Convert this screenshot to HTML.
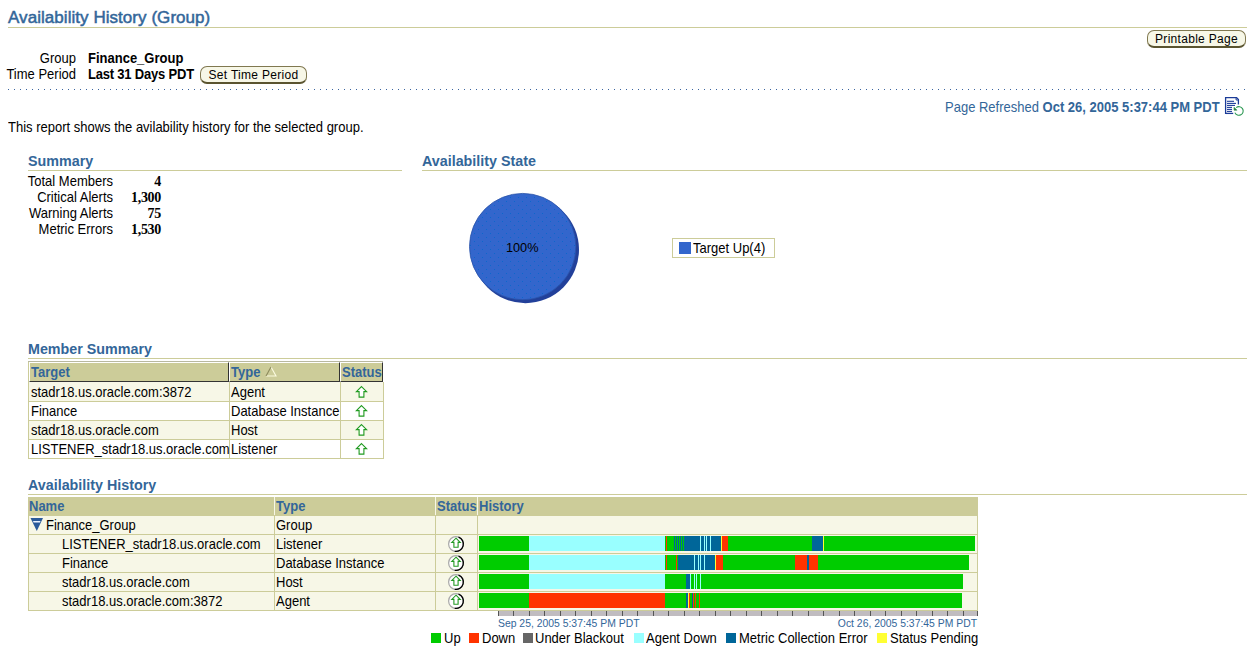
<!DOCTYPE html>
<html><head><meta charset="utf-8">
<style>
html,body{margin:0;padding:0;background:#fff;width:1251px;height:652px;overflow:hidden;position:relative;font-family:"Liberation Sans",sans-serif;color:#000}
.a{position:absolute;white-space:nowrap}
.t13{font-size:13px;line-height:15px;transform:scaleY(1.09);transform-origin:0 7.2px}
.t17{font-size:17px;line-height:19px;color:#336699;-webkit-text-stroke:0.5px #336699;letter-spacing:0.05px}
.hd{font-size:14.3px;line-height:16px;font-weight:bold;color:#336699}
.b{font-weight:bold}
.r{text-align:right}
.line{position:absolute;height:1px;background:#cccc99}
.btn{position:absolute;box-sizing:border-box;border:1px solid #807850;border-bottom:2px solid #5a5430;border-radius:7px;background:#f7f7e7;font-size:12px;line-height:14px;text-align:center;letter-spacing:0.3px}
.th{color:#336699;font-weight:bold}
.serif{font-family:"Liberation Serif",serif;font-weight:bold;font-size:14px;letter-spacing:-0.3px}
.blue{color:#336699}
.rect{position:absolute}
</style></head>
<body>
<!-- Title -->
<div class="a t17" style="left:8px;top:8px">Availability History (Group)</div>
<div class="line" style="left:8px;top:27px;width:1239px"></div>
<div class="btn" style="left:1147px;top:30px;width:99px;height:18px;padding-top:1px">Printable Page</div>

<div class="a t13 r" style="left:0;width:76px;top:51px">Group</div>
<div class="a t13 b" style="left:88px;top:51px">Finance_Group</div>
<div class="a t13 r" style="left:0;width:76px;top:67px">Time Period</div>
<div class="a t13 b" style="left:88px;top:67px;letter-spacing:-0.2px">Last 31 Days PDT</div>
<div class="btn" style="left:200px;top:66px;width:107px;height:18px;padding-top:1px">Set Time Period</div>

<div class="a" style="left:8px;top:89px;width:1239px;height:1px;background-image:linear-gradient(to right,#3a64a0 1px,transparent 1px);background-size:6px 1px"></div>

<div class="a t13 blue" style="left:945px;top:100px">Page Refreshed <b>Oct 26, 2005 5:37:44 PM PDT</b></div>

<svg class="a" style="left:1222px;top:95px" width="26" height="24" viewBox="0 0 26 24">
<path d="M3.6 19 L3.6 2.6 L14.6 2.6 L16.4 4.4 L16.4 9.6" fill="none" stroke="#1c3c98" stroke-width="1.3"/>
<path d="M3.6 18.4 L11.2 18.4" fill="none" stroke="#1c3c98" stroke-width="1.3"/>
<path d="M14.1 2.6 L14.1 5 L16.4 5" fill="none" stroke="#1c3c98" stroke-width="1"/>
<g stroke="#1c3c98" stroke-width="1.1">
<line x1="5" y1="6.3" x2="12" y2="6.3"/><line x1="5" y1="8.4" x2="14" y2="8.4"/><line x1="5" y1="10.4" x2="13" y2="10.4"/>
<line x1="5" y1="12.4" x2="10" y2="12.4"/><line x1="5" y1="14.4" x2="10" y2="14.4"/><line x1="5" y1="16.4" x2="10" y2="16.4"/>
</g>
<path d="M12.9 17.6 A4.3 4.3 0 1 0 14.2 12.6" fill="none" stroke="#2f9a55" stroke-width="1.1"/>
<path d="M12.1 12.3 L12.1 15.2 L14.9 15.2 Z" fill="#1f7f3a" stroke="#1f7f3a" stroke-width="0.6"/>
</svg>
<div class="a t13" style="left:8px;top:120px">This report shows the avilability history for the selected group.</div>

<!-- Summary -->
<div class="a hd" style="left:28px;top:153px">Summary</div>
<div class="line" style="left:28px;top:170px;width:374px"></div>
<div class="a t13 r" style="left:0;width:113px;top:174px">Total Members</div>
<div class="a t13 r" style="left:0;width:113px;top:190px">Critical Alerts</div>
<div class="a t13 r" style="left:0;width:113px;top:206px">Warning Alerts</div>
<div class="a t13 r" style="left:0;width:113px;top:222px">Metric Errors</div>
<div class="a t13 r serif" style="left:100px;width:61px;top:174px">4</div>
<div class="a t13 r serif" style="left:100px;width:61px;top:190px">1,300</div>
<div class="a t13 r serif" style="left:100px;width:61px;top:206px">75</div>
<div class="a t13 r serif" style="left:100px;width:61px;top:222px">1,530</div>

<!-- Availability State -->
<div class="a hd" style="left:422px;top:153px">Availability State</div>
<div class="line" style="left:422px;top:170px;width:825px"></div>
<svg class="a" style="left:460px;top:185px" width="130" height="125">
  <defs><pattern id="dots" width="8" height="8" patternUnits="userSpaceOnUse"><rect width="8" height="8" fill="#3366cc"/><rect x="6" y="0" width="1" height="1" fill="#0d66cc"/><rect x="2" y="4" width="1" height="1" fill="#0d66cc"/></pattern></defs>
  <circle cx="65.4" cy="64.6" r="53.6" fill="#22409a"/>
  <circle cx="62.7" cy="61.6" r="53.2" fill="url(#dots)" stroke="#2a52a8" stroke-width="0.8"/>
</svg>
<div class="a" style="left:506px;top:241px;font-size:12.7px;line-height:15px">100%</div>
<div class="a" style="left:672px;top:238px;width:101px;height:18px;border:1px solid #cccc99"></div>
<div class="rect" style="left:679px;top:242px;width:12px;height:12px;background:#3366cc"></div>
<div class="a t13" style="left:693px;top:241px">Target Up(4)</div>

<!-- Member Summary -->
<div class="a hd" style="left:28px;top:341px">Member Summary</div>
<div class="line" style="left:28px;top:358px;width:1219px"></div>

<!-- Member Summary table -->
<div class="rect" style="left:28px;top:361px;width:356px;height:98px;background:#cccc99"></div>
<div class="rect" style="left:28px;top:361px;width:355px;height:1px;background:#b8b8a0"></div><div class="rect" style="left:383px;top:361px;width:1px;height:21px;background:#fff"></div>
<!-- header cells -->
<div class="rect" style="left:29px;top:362px;width:199px;height:19px;background:#cccc99;border-top:1px solid #fff;border-left:1px solid #fff;border-bottom:1px solid #333;border-right:1px solid #333;box-sizing:border-box;height:20px;width:200px"></div>
<div class="rect" style="left:229px;top:362px;width:111px;height:20px;background:#cccc99;border-top:1px solid #fff;border-left:1px solid #fff;border-bottom:1px solid #333;border-right:1px solid #333;box-sizing:border-box"></div>
<div class="rect" style="left:340px;top:362px;width:43px;height:20px;background:#cccc99;border-top:1px solid #fff;border-left:1px solid #fff;border-bottom:1px solid #333;border-right:1px solid #333;box-sizing:border-box"></div>
<div class="a t13 th" style="left:31px;top:365px">Target</div>
<div class="a t13 th" style="left:231px;top:365px">Type</div>
<svg class="a" style="left:265px;top:366px" width="12" height="11"><path d="M6 1 L11 10 L1 10" fill="none" stroke="#fbfbe0" stroke-width="1.1"/><path d="M1 10 L6 1" fill="none" stroke="#8c8a5c" stroke-width="1.1"/></svg>
<div class="a t13 th" style="left:342px;top:365px">Status</div>
<div class="rect" style="left:29px;top:382px;width:200px;height:19px;background:#f7f7e7"></div><div class="rect" style="left:230px;top:382px;width:110px;height:19px;background:#f7f7e7"></div><div class="rect" style="left:341px;top:382px;width:42px;height:19px;background:#f7f7e7"></div><div class="a t13" style="left:31px;top:385px">stadr18.us.oracle.com:3872</div><div class="a t13" style="left:231px;top:385px">Agent</div><svg class="a" style="left:355px;top:385px" width="13" height="14"><path d="M6.5 1.6 L11.6 6.6 L8.9 6.6 L8.9 12.1 L4.1 12.1 L4.1 6.6 L1.4 6.6 Z" fill="#fff" stroke="#1f9a1f" stroke-width="1.1" stroke-linejoin="miter"/></svg>
<div class="rect" style="left:29px;top:402px;width:200px;height:18px;background:#ffffff"></div><div class="rect" style="left:230px;top:402px;width:110px;height:18px;background:#ffffff"></div><div class="rect" style="left:341px;top:402px;width:42px;height:18px;background:#ffffff"></div><div class="a t13" style="left:31px;top:404px">Finance</div><div class="a t13" style="left:231px;top:404px">Database Instance</div><svg class="a" style="left:355px;top:404px" width="13" height="14"><path d="M6.5 1.6 L11.6 6.6 L8.9 6.6 L8.9 12.1 L4.1 12.1 L4.1 6.6 L1.4 6.6 Z" fill="#fff" stroke="#1f9a1f" stroke-width="1.1" stroke-linejoin="miter"/></svg>
<div class="rect" style="left:29px;top:421px;width:200px;height:18px;background:#f7f7e7"></div><div class="rect" style="left:230px;top:421px;width:110px;height:18px;background:#f7f7e7"></div><div class="rect" style="left:341px;top:421px;width:42px;height:18px;background:#f7f7e7"></div><div class="a t13" style="left:31px;top:423px">stadr18.us.oracle.com</div><div class="a t13" style="left:231px;top:423px">Host</div><svg class="a" style="left:355px;top:423px" width="13" height="14"><path d="M6.5 1.6 L11.6 6.6 L8.9 6.6 L8.9 12.1 L4.1 12.1 L4.1 6.6 L1.4 6.6 Z" fill="#fff" stroke="#1f9a1f" stroke-width="1.1" stroke-linejoin="miter"/></svg>
<div class="rect" style="left:29px;top:440px;width:200px;height:18px;background:#ffffff"></div><div class="rect" style="left:230px;top:440px;width:110px;height:18px;background:#ffffff"></div><div class="rect" style="left:341px;top:440px;width:42px;height:18px;background:#ffffff"></div><div class="a t13" style="left:31px;top:442px">LISTENER_stadr18.us.oracle.com</div><div class="a t13" style="left:231px;top:442px">Listener</div><svg class="a" style="left:355px;top:442px" width="13" height="14"><path d="M6.5 1.6 L11.6 6.6 L8.9 6.6 L8.9 12.1 L4.1 12.1 L4.1 6.6 L1.4 6.6 Z" fill="#fff" stroke="#1f9a1f" stroke-width="1.1" stroke-linejoin="miter"/></svg>

<!-- Availability History -->
<div class="a hd" style="left:28px;top:477px">Availability History</div>
<div class="line" style="left:28px;top:494px;width:1219px"></div>
<div class="rect" style="left:28px;top:497px;width:950px;height:18px;background:#cccc99"></div>
<div class="rect" style="left:274px;top:497px;width:1px;height:18px;background:#f7f7e7"></div><div class="rect" style="left:435px;top:497px;width:1px;height:18px;background:#f7f7e7"></div><div class="rect" style="left:477px;top:497px;width:1px;height:18px;background:#f7f7e7"></div>
<div class="rect" style="left:28px;top:515px;width:950px;height:96px;background:#cccc99"></div>
<div class="a t13 th" style="left:29px;top:499px">Name</div><div class="a t13 th" style="left:276px;top:499px">Type</div><div class="a t13 th" style="left:437px;top:499px">Status</div><div class="a t13 th" style="left:479px;top:499px">History</div>
<div class="rect" style="left:29px;top:516px;width:245px;height:18px;background:#f7f7e7"></div><div class="rect" style="left:275px;top:516px;width:160px;height:18px;background:#f7f7e7"></div><div class="rect" style="left:436px;top:516px;width:41px;height:18px;background:#f7f7e7"></div><div class="rect" style="left:478px;top:516px;width:499px;height:18px;background:#f7f7e7"></div><svg class="a" style="left:30px;top:517px" width="14" height="15"><path d="M0.5 1 L13 1 L6.8 14 Z" fill="#2a5a9a"/><path d="M3 4 L10.5 4 L10 5.5 L3.6 5.5 Z" fill="#e8f0ff"/></svg><div class="a t13" style="left:46px;top:518px">Finance_Group</div><div class="a t13" style="left:276px;top:518px">Group</div>
<div class="rect" style="left:29px;top:535px;width:245px;height:18px;background:#f7f7e7"></div><div class="rect" style="left:275px;top:535px;width:160px;height:18px;background:#f7f7e7"></div><div class="rect" style="left:436px;top:535px;width:41px;height:18px;background:#f7f7e7"></div><div class="rect" style="left:478px;top:535px;width:499px;height:18px;background:#f7f7e7"></div><div class="a t13" style="left:62px;top:537px">LISTENER_stadr18.us.oracle.com</div><div class="a t13" style="left:276px;top:537px">Listener</div><svg class="a" style="left:447px;top:536px" width="18" height="18"><circle cx="9" cy="8" r="7.4" fill="#fff" stroke="#a8a8a8" stroke-width="1.2"/><path d="M11.53 1.05 A7.4 7.4 0 0 1 7.72 15.29" fill="none" stroke="#000" stroke-width="1.3"/><path d="M9 2.2 L13.2 6.4 L11.1 6.4 L11.1 11.2 L6.9 11.2 L6.9 6.4 L4.8 6.4 Z" fill="#fff" stroke="#229922" stroke-width="1.1"/></svg>
<div class="rect" style="left:29px;top:554px;width:245px;height:18px;background:#f7f7e7"></div><div class="rect" style="left:275px;top:554px;width:160px;height:18px;background:#f7f7e7"></div><div class="rect" style="left:436px;top:554px;width:41px;height:18px;background:#f7f7e7"></div><div class="rect" style="left:478px;top:554px;width:499px;height:18px;background:#f7f7e7"></div><div class="a t13" style="left:62px;top:556px">Finance</div><div class="a t13" style="left:276px;top:556px">Database Instance</div><svg class="a" style="left:447px;top:555px" width="18" height="18"><circle cx="9" cy="8" r="7.4" fill="#fff" stroke="#a8a8a8" stroke-width="1.2"/><path d="M11.53 1.05 A7.4 7.4 0 0 1 7.72 15.29" fill="none" stroke="#000" stroke-width="1.3"/><path d="M9 2.2 L13.2 6.4 L11.1 6.4 L11.1 11.2 L6.9 11.2 L6.9 6.4 L4.8 6.4 Z" fill="#fff" stroke="#229922" stroke-width="1.1"/></svg>
<div class="rect" style="left:29px;top:573px;width:245px;height:18px;background:#f7f7e7"></div><div class="rect" style="left:275px;top:573px;width:160px;height:18px;background:#f7f7e7"></div><div class="rect" style="left:436px;top:573px;width:41px;height:18px;background:#f7f7e7"></div><div class="rect" style="left:478px;top:573px;width:499px;height:18px;background:#f7f7e7"></div><div class="a t13" style="left:62px;top:575px">stadr18.us.oracle.com</div><div class="a t13" style="left:276px;top:575px">Host</div><svg class="a" style="left:447px;top:574px" width="18" height="18"><circle cx="9" cy="8" r="7.4" fill="#fff" stroke="#a8a8a8" stroke-width="1.2"/><path d="M11.53 1.05 A7.4 7.4 0 0 1 7.72 15.29" fill="none" stroke="#000" stroke-width="1.3"/><path d="M9 2.2 L13.2 6.4 L11.1 6.4 L11.1 11.2 L6.9 11.2 L6.9 6.4 L4.8 6.4 Z" fill="#fff" stroke="#229922" stroke-width="1.1"/></svg>
<div class="rect" style="left:29px;top:592px;width:245px;height:18px;background:#f7f7e7"></div><div class="rect" style="left:275px;top:592px;width:160px;height:18px;background:#f7f7e7"></div><div class="rect" style="left:436px;top:592px;width:41px;height:18px;background:#f7f7e7"></div><div class="rect" style="left:478px;top:592px;width:499px;height:18px;background:#f7f7e7"></div><div class="a t13" style="left:62px;top:594px">stadr18.us.oracle.com:3872</div><div class="a t13" style="left:276px;top:594px">Agent</div><svg class="a" style="left:447px;top:593px" width="18" height="18"><circle cx="9" cy="8" r="7.4" fill="#fff" stroke="#a8a8a8" stroke-width="1.2"/><path d="M11.53 1.05 A7.4 7.4 0 0 1 7.72 15.29" fill="none" stroke="#000" stroke-width="1.3"/><path d="M9 2.2 L13.2 6.4 L11.1 6.4 L11.1 11.2 L6.9 11.2 L6.9 6.4 L4.8 6.4 Z" fill="#fff" stroke="#229922" stroke-width="1.1"/></svg>
<div class="rect" style="left:479px;top:536px;width:50px;height:15px;background:#00cc00"></div><div class="rect" style="left:529px;top:536px;width:136px;height:15px;background:#99ffff"></div><div class="rect" style="left:665px;top:536px;width:1px;height:15px;background:#00cc00"></div><div class="rect" style="left:666px;top:536px;width:1px;height:15px;background:#ff3300"></div><div class="rect" style="left:667px;top:536px;width:7px;height:15px;background:#00cc00"></div><div class="rect" style="left:674px;top:536px;width:1px;height:15px;background:#006699"></div><div class="rect" style="left:675px;top:536px;width:1px;height:15px;background:#00cc00"></div><div class="rect" style="left:676px;top:536px;width:1px;height:15px;background:#006699"></div><div class="rect" style="left:677px;top:536px;width:1px;height:15px;background:#00cc00"></div><div class="rect" style="left:678px;top:536px;width:1px;height:15px;background:#006699"></div><div class="rect" style="left:679px;top:536px;width:1px;height:15px;background:#00cc00"></div><div class="rect" style="left:680px;top:536px;width:1px;height:15px;background:#006699"></div><div class="rect" style="left:681px;top:536px;width:1px;height:15px;background:#00cc00"></div><div class="rect" style="left:682px;top:536px;width:1px;height:15px;background:#006699"></div><div class="rect" style="left:683px;top:536px;width:1px;height:15px;background:#00cc00"></div><div class="rect" style="left:684px;top:536px;width:16px;height:15px;background:#006699"></div><div class="rect" style="left:700px;top:536px;width:1px;height:15px;background:#99ffff"></div><div class="rect" style="left:701px;top:536px;width:3px;height:15px;background:#006699"></div><div class="rect" style="left:704px;top:536px;width:1px;height:15px;background:#99ffff"></div><div class="rect" style="left:705px;top:536px;width:1px;height:15px;background:#006699"></div><div class="rect" style="left:706px;top:536px;width:1px;height:15px;background:#99ffff"></div><div class="rect" style="left:707px;top:536px;width:3px;height:15px;background:#006699"></div><div class="rect" style="left:710px;top:536px;width:1px;height:15px;background:#99ffff"></div><div class="rect" style="left:711px;top:536px;width:10px;height:15px;background:#006699"></div><div class="rect" style="left:721px;top:536px;width:1px;height:15px;background:#ffff33"></div><div class="rect" style="left:722px;top:536px;width:6px;height:15px;background:#ff3300"></div><div class="rect" style="left:728px;top:536px;width:84px;height:15px;background:#00cc00"></div><div class="rect" style="left:812px;top:536px;width:11px;height:15px;background:#006699"></div><div class="rect" style="left:823px;top:536px;width:1px;height:15px;background:#ffff33"></div><div class="rect" style="left:824px;top:536px;width:151px;height:15px;background:#00cc00"></div>
<div class="rect" style="left:479px;top:555px;width:50px;height:15px;background:#00cc00"></div><div class="rect" style="left:529px;top:555px;width:136px;height:15px;background:#99ffff"></div><div class="rect" style="left:665px;top:555px;width:1px;height:15px;background:#00cc00"></div><div class="rect" style="left:666px;top:555px;width:1px;height:15px;background:#ff3300"></div><div class="rect" style="left:667px;top:555px;width:9px;height:15px;background:#00cc00"></div><div class="rect" style="left:676px;top:555px;width:1px;height:15px;background:#ff3300"></div><div class="rect" style="left:677px;top:555px;width:1px;height:15px;background:#00cc00"></div><div class="rect" style="left:678px;top:555px;width:16px;height:15px;background:#006699"></div><div class="rect" style="left:694px;top:555px;width:1px;height:15px;background:#99ffff"></div><div class="rect" style="left:695px;top:555px;width:3px;height:15px;background:#006699"></div><div class="rect" style="left:698px;top:555px;width:1px;height:15px;background:#99ffff"></div><div class="rect" style="left:699px;top:555px;width:1px;height:15px;background:#006699"></div><div class="rect" style="left:700px;top:555px;width:1px;height:15px;background:#99ffff"></div><div class="rect" style="left:701px;top:555px;width:3px;height:15px;background:#006699"></div><div class="rect" style="left:704px;top:555px;width:1px;height:15px;background:#99ffff"></div><div class="rect" style="left:705px;top:555px;width:10px;height:15px;background:#006699"></div><div class="rect" style="left:715px;top:555px;width:1px;height:15px;background:#ffff33"></div><div class="rect" style="left:716px;top:555px;width:7px;height:15px;background:#ff3300"></div><div class="rect" style="left:723px;top:555px;width:72px;height:15px;background:#00cc00"></div><div class="rect" style="left:795px;top:555px;width:12px;height:15px;background:#ff3300"></div><div class="rect" style="left:807px;top:555px;width:2px;height:15px;background:#006699"></div><div class="rect" style="left:809px;top:555px;width:9px;height:15px;background:#ff3300"></div><div class="rect" style="left:818px;top:555px;width:151px;height:15px;background:#00cc00"></div>
<div class="rect" style="left:479px;top:574px;width:50px;height:15px;background:#00cc00"></div><div class="rect" style="left:529px;top:574px;width:136px;height:15px;background:#99ffff"></div><div class="rect" style="left:665px;top:574px;width:21px;height:15px;background:#00cc00"></div><div class="rect" style="left:686px;top:574px;width:4px;height:15px;background:#006699"></div><div class="rect" style="left:690px;top:574px;width:1px;height:15px;background:#99ffff"></div><div class="rect" style="left:691px;top:574px;width:3px;height:15px;background:#00cc00"></div><div class="rect" style="left:694px;top:574px;width:1px;height:15px;background:#99ffff"></div><div class="rect" style="left:695px;top:574px;width:1px;height:15px;background:#00cc00"></div><div class="rect" style="left:696px;top:574px;width:1px;height:15px;background:#99ffff"></div><div class="rect" style="left:697px;top:574px;width:3px;height:15px;background:#00cc00"></div><div class="rect" style="left:700px;top:574px;width:1px;height:15px;background:#99ffff"></div><div class="rect" style="left:701px;top:574px;width:262px;height:15px;background:#00cc00"></div>
<div class="rect" style="left:479px;top:593px;width:50px;height:15px;background:#00cc00"></div><div class="rect" style="left:529px;top:593px;width:136px;height:15px;background:#ff3300"></div><div class="rect" style="left:665px;top:593px;width:21px;height:15px;background:#00cc00"></div><div class="rect" style="left:686px;top:593px;width:2px;height:15px;background:#006699"></div><div class="rect" style="left:688px;top:593px;width:1px;height:15px;background:#ffff33"></div><div class="rect" style="left:689px;top:593px;width:1px;height:15px;background:#ff3300"></div><div class="rect" style="left:690px;top:593px;width:2px;height:15px;background:#00cc00"></div><div class="rect" style="left:692px;top:593px;width:1px;height:15px;background:#006699"></div><div class="rect" style="left:693px;top:593px;width:1px;height:15px;background:#ff3300"></div><div class="rect" style="left:694px;top:593px;width:1px;height:15px;background:#00cc00"></div><div class="rect" style="left:695px;top:593px;width:1px;height:15px;background:#ff3300"></div><div class="rect" style="left:696px;top:593px;width:3px;height:15px;background:#00cc00"></div><div class="rect" style="left:699px;top:593px;width:1px;height:15px;background:#ff3300"></div><div class="rect" style="left:700px;top:593px;width:262px;height:15px;background:#00cc00"></div>
<div class="rect" style="left:498px;top:611px;width:479px;height:5px;background:#c0bcc0"></div>
<div class="rect" style="left:498px;top:611px;width:1px;height:5px;background:#555"></div><div class="rect" style="left:513px;top:611px;width:1px;height:5px;background:#555"></div><div class="rect" style="left:529px;top:611px;width:1px;height:5px;background:#555"></div><div class="rect" style="left:544px;top:611px;width:1px;height:5px;background:#555"></div><div class="rect" style="left:560px;top:611px;width:1px;height:5px;background:#555"></div><div class="rect" style="left:575px;top:611px;width:1px;height:5px;background:#555"></div><div class="rect" style="left:591px;top:611px;width:1px;height:5px;background:#555"></div><div class="rect" style="left:606px;top:611px;width:1px;height:5px;background:#555"></div><div class="rect" style="left:622px;top:611px;width:1px;height:5px;background:#555"></div><div class="rect" style="left:637px;top:611px;width:1px;height:5px;background:#555"></div><div class="rect" style="left:653px;top:611px;width:1px;height:5px;background:#555"></div><div class="rect" style="left:668px;top:611px;width:1px;height:5px;background:#555"></div><div class="rect" style="left:684px;top:611px;width:1px;height:5px;background:#555"></div><div class="rect" style="left:699px;top:611px;width:1px;height:5px;background:#555"></div><div class="rect" style="left:715px;top:611px;width:1px;height:5px;background:#555"></div><div class="rect" style="left:730px;top:611px;width:1px;height:5px;background:#555"></div><div class="rect" style="left:746px;top:611px;width:1px;height:5px;background:#555"></div><div class="rect" style="left:761px;top:611px;width:1px;height:5px;background:#555"></div><div class="rect" style="left:777px;top:611px;width:1px;height:5px;background:#555"></div><div class="rect" style="left:792px;top:611px;width:1px;height:5px;background:#555"></div><div class="rect" style="left:808px;top:611px;width:1px;height:5px;background:#555"></div><div class="rect" style="left:823px;top:611px;width:1px;height:5px;background:#555"></div><div class="rect" style="left:839px;top:611px;width:1px;height:5px;background:#555"></div><div class="rect" style="left:854px;top:611px;width:1px;height:5px;background:#555"></div><div class="rect" style="left:870px;top:611px;width:1px;height:5px;background:#555"></div><div class="rect" style="left:885px;top:611px;width:1px;height:5px;background:#555"></div><div class="rect" style="left:901px;top:611px;width:1px;height:5px;background:#555"></div><div class="rect" style="left:916px;top:611px;width:1px;height:5px;background:#555"></div><div class="rect" style="left:932px;top:611px;width:1px;height:5px;background:#555"></div><div class="rect" style="left:947px;top:611px;width:1px;height:5px;background:#555"></div><div class="rect" style="left:963px;top:611px;width:1px;height:5px;background:#555"></div><div class="rect" style="left:977px;top:611px;width:1px;height:5px;background:#555"></div>
<div class="a blue" style="left:498px;top:618px;font-size:10.4px;line-height:11px">Sep 25, 2005 5:37:45 PM PDT</div>
<div class="a blue r" style="left:777px;width:200px;top:618px;font-size:10.4px;line-height:11px">Oct 26, 2005 5:37:45 PM PDT</div>
<div class="rect" style="left:431px;top:633px;width:10px;height:10px;background:#00cc00"></div><div class="a t13" style="left:444px;top:631px">Up</div>
<div class="rect" style="left:469px;top:633px;width:10px;height:10px;background:#ff3300"></div><div class="a t13" style="left:482px;top:631px">Down</div>
<div class="rect" style="left:523px;top:633px;width:10px;height:10px;background:#666666"></div><div class="a t13" style="left:535px;top:631px">Under Blackout</div>
<div class="rect" style="left:634px;top:633px;width:10px;height:10px;background:#99ffff"></div><div class="a t13" style="left:646px;top:631px">Agent Down</div>
<div class="rect" style="left:726px;top:633px;width:10px;height:10px;background:#006699"></div><div class="a t13" style="left:739px;top:631px">Metric Collection Error</div>
<div class="rect" style="left:877px;top:633px;width:10px;height:10px;background:#ffff33"></div><div class="a t13" style="left:890px;top:631px">Status Pending</div>
</body></html>
